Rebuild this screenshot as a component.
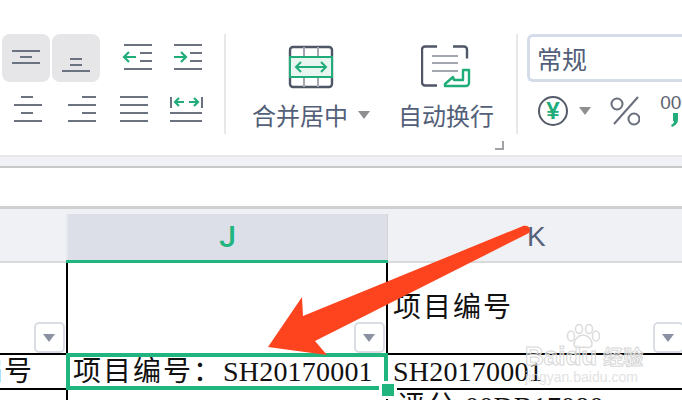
<div class="page">
	<section class="ribbon">
		<div class="align-group">
			<div class="icon-row top">
				<button class="tool">
					<svg width="48" height="48" viewBox="0 0 48 48"><path class="g" d="M10 17h28M18 23h12M10 29h28" /></svg>
				</button>
				<button class="tool">
					<svg width="48" height="48" viewBox="0 0 48 48"><path class="g" d="M18 25h12M18 31h12M10 37h28" /></svg>
				</button>
				<span class="plain first">
					<svg width="40" height="32" viewBox="0 0 40 32"><path class="g" d="M8 4h28M24 12h12M24 20h12M8 28h28" /><path class="gr" d="M20 16H9M13 11l-5 5 5 5" /></svg>
				</span>
				<span class="plain">
					<svg width="40" height="32" viewBox="0 0 40 32"><path class="g" d="M8 4h28M24 12h12M24 20h12M8 28h28" /><path class="gr" d="M8 16h11M15 11l5 5-5 5" /></svg>
				</span>
			</div>
			<div class="icon-row bottom">
				<svg width="34" height="30" viewBox="0 0 34 30"><path class="g" d="M10 3h12M3 11h28M10 19h12M3 27h28" /></svg>
				<svg width="32" height="30" viewBox="0 0 32 30"><path class="g" d="M17 3h14M3 11h28M17 19h14M3 27h28" /></svg>
				<svg width="32" height="30" viewBox="0 0 32 30"><path class="g" d="M3 3h28M3 11h28M3 19h28M3 27h28" /></svg>
				<svg width="36" height="30" viewBox="0 0 36 30"><path class="g" d="M2 3v11M33 3v11M1 19h32M1 27h32" /><path class="gr" d="M6 8h9M10 4L6 8l4 4M29 8h-9M25 4l4 4-4 4" /></svg>
			</div>
		</div>

		<div class="sep"></div>

		<div class="big-btn merge">
			<svg width="48" height="44" viewBox="0 0 48 44">
				<rect x="3" y="2" width="42" height="40" rx="3" class="dark" />
				<path class="thin" d="M17 2v40M31 2v40" />
				<rect x="3" y="12" width="42" height="20" fill="#e8f5f0" stroke="#20ad7a" stroke-width="2" />
				<path class="merge-arrow" d="M9 22h30M14 17l-5 5 5 5M34 17l5 5-5 5" />
			</svg>
			<div class="big-label">合并居中<i class="caret"></i></div>
		</div>
		<div class="big-btn wrap">
			<svg width="50" height="44" viewBox="0 0 50 44">
				<path class="dark" d="M16 1.500H4a3 3 0 0 0-3 3v33a3 3 0 0 0 3 3h12M32 1.500h11a3 3 0 0 1 3 3v9" />
				<path class="thin" d="M11 11h26M11 18h26M11 26h26" />
				<path class="wrap-arrow" d="M42 25h6v13a3 3 0 0 1-3 3H24v-2l8-7 1 3h9z" />
			</svg>
			<div class="big-label">自动换行</div>
		</div>
		<span class="launcher"></span>

		<div class="sep last"></div>

		<div class="number-group">
			<div class="format">常规</div>
			<div class="number-tools">
				<span class="yen">¥</span>
				<i class="caret"></i>
				<svg class="percent" width="30" height="30" viewBox="0 0 30 30"><circle class="g1" cx="7" cy="8" r="5.500" /><circle class="g1" cx="24" cy="23" r="5.500" /><path class="g1" d="M28 1L4 28" /></svg>
				<div class="thousand">
					<span>000</span>
					<svg width="10" height="14" viewBox="0 0 10 14"><path d="M3 0h5v6c0 4-2 6-6 8l-1-2c2-1 3-2 3-4H3z" fill="#20ad7a" /></svg>
				</div>
			</div>
		</div>
	</section>

	<div class="strip"></div>
	<div class="formula-bar"></div>

	<section class="sheet">
		<div class="col-heads">
			<div class="head blank"></div>
			<div class="head active">J</div>
			<div class="head k">K</div>
		</div>

		<div class="row title">
			<div class="cell a"><span class="filter"></span></div>
			<div class="cell j"><span class="filter"></span></div>
			<div class="cell k"><span class="cjk">项目编号</span><span class="filter"></span></div>
		</div>
		<div class="row data">
			<div class="cell a tail"><span class="cjk">编号</span></div>
			<div class="cell j selected"><span class="cjk">项目编号：</span>SH20170001<span class="handle"></span></div>
			<div class="cell k">SH20170001</div>
		</div>
		<div class="row next">
			<div class="cell a"></div>
			<div class="cell j"></div>
			<div class="cell k"><span class="cjk">评分</span>00DB17080</div>
		</div>
	</section>

	<div class="watermark">
		<svg class="paw" width="36" height="26" viewBox="0 0 36 26">
			<ellipse cx="6" cy="12" rx="3.500" ry="5" />
			<ellipse cx="14" cy="5" rx="3.500" ry="4.500" />
			<ellipse cx="24" cy="5" rx="3.500" ry="4.500" />
			<ellipse cx="31" cy="12" rx="3.500" ry="5" />
			<path d="M18 11c-5 0-9 5-9 9 0 4 4 4 9 3 5 1 9 1 9-3 0-4-4-9-9-9z" />
		</svg>
		<div class="wm-main"><span>Baidu</span><span class="wm-cn">经验</span></div>
		<div class="wm-url">jingyan.baidu.com</div>
	</div>

	<svg class="pointer" width="682" height="400" viewBox="0 0 682 400">
		<path d="M268 347L302 297l1 19L523 226c4-1 7 1 7 4 0 2-1 3-3 4L315 341l12 14z" fill="#fe441e" />
	</svg>
</div>

<style>
	:global(body) {
		margin: 0;
		background: #fff;
	}

	.page {
		position: relative;
		width: 682px;
		height: 400px;
		overflow: hidden;
		display: flex;
		flex-direction: column;
		font-family: "Noto Sans CJK SC", "Liberation Sans", sans-serif;
	}

	.ribbon {
		position: relative;
		height: 155px;
		flex: none;
		display: flex;
		align-items: flex-start;
		padding-top: 34px;
		box-sizing: border-box;
	}

	.align-group {
		width: 224px;
		flex: none;
	}

	.icon-row {
		display: flex;
		align-items: center;
	}

	.tool {
		width: 48px;
		height: 48px;
		padding: 0;
		border: 0;
		border-radius: 8px;
		background: #e6e6e8;
		margin-left: 2px;
	}

	.tool svg,
	.plain svg,
	.bottom svg {
		display: block;
	}

	.plain {
		margin-left: 10px;
		margin-top: -2px;
	}

	.plain.first {
		margin-left: 16px;
	}

	.bottom {
		margin-top: 12px;
		padding-left: 11px;
		gap: 20px;
	}

	.g {
		fill: none;
		stroke: #6b7280;
		stroke-width: 2;
	}

	.g1 {
		fill: none;
		stroke: #686e7c;
		stroke-width: 2;
	}

	.gr {
		fill: none;
		stroke: #20ad7a;
		stroke-width: 2.2;
	}

	.sep {
		width: 2px;
		height: 100px;
		background: #e8e8ea;
		flex: none;
	}

	.big-btn {
		display: flex;
		flex-direction: column;
		align-items: center;
		margin-top: 11px;
		flex: none;
	}

	.merge {
		width: 120px;
		margin-left: 25px;
	}

	.wrap {
		width: 100px;
		margin-left: 25px;
	}

	.big-label {
		margin-top: 10px;
		font-size: 24px;
		line-height: 32px;
		color: #535f78;
		white-space: nowrap;
	}

	.dark {
		fill: none;
		stroke: #4f5666;
		stroke-width: 2.4;
	}

	.thin {
		fill: none;
		stroke: #a4a7af;
		stroke-width: 2;
	}

	.merge-arrow {
		fill: none;
		stroke: #20ad7a;
		stroke-width: 2;
	}

	.wrap-arrow {
		fill: #fff;
		stroke: #20ad7a;
		stroke-width: 2.4;
		stroke-linejoin: round;
	}

	.caret {
		display: inline-block;
		width: 0;
		height: 0;
		margin-left: 10px;
		vertical-align: 6px;
		border-left: 6px solid transparent;
		border-right: 6px solid transparent;
		border-top: 8px solid #8f8f92;
	}

	.launcher {
		position: absolute;
		left: 495px;
		top: 141px;
		width: 7px;
		height: 7px;
		border-right: 2px solid #a0a2a8;
		border-bottom: 2px solid #a0a2a8;
	}

	.sep.last {
		margin-left: 20px;
	}

	.number-group {
		margin-left: 9px;
		flex: 1;
		min-width: 0;
	}

	.format {
		height: 48px;
		box-sizing: border-box;
		margin-right: -20px;
		padding-left: 7px;
		border: 3px solid #d4dcea;
		border-right: 0;
		border-radius: 6px 0 0 6px;
		font-size: 25px;
		line-height: 42px;
		color: #535f78;
	}

	.number-tools {
		display: flex;
		align-items: center;
		margin-top: 12px;
		padding-left: 11px;
		white-space: nowrap;
	}

	.yen {
		width: 26px;
		height: 26px;
		flex: none;
		border: 2px solid #535a69;
		border-radius: 50%;
		text-align: center;
		font: 700 24px/26px "Liberation Sans", sans-serif;
		color: #20ad7a;
	}

	.number-tools .caret {
		margin-left: 11px;
		flex: none;
	}

	.percent {
		margin-left: 19px;
		flex: none;
	}

	.thousand {
		margin-left: 21px;
		padding-top: 1px;
		flex: none;
		width: 30px;
		display: flex;
		flex-direction: column;
		align-items: center;
		gap: 2px;
		font: 19px/16px "Liberation Sans", sans-serif;
		color: #5d6473;
	}

	.thousand svg {
		display: block;
		margin-right: 3px;
	}

	.strip {
		height: 11px;
		flex: none;
		box-sizing: border-box;
		background: #f0f1f5;
		border-top: 2px solid #e8e8ea;
	}

	.formula-bar {
		height: 40px;
		flex: none;
		box-sizing: border-box;
		border-top: 2px solid #c8c8c9;
	}

	.sheet {
		flex: 1;
		border-top: 3px solid #d0d0d2;
	}

	.col-heads {
		display: flex;
		height: 54px;
		background: #f0f1f5;
	}

	.head {
		box-sizing: border-box;
		text-align: center;
		font: 28px/50px "Liberation Sans", sans-serif;
		color: #56627a;
		border-bottom: 2px solid #d9dadc;
		padding-top: 3px;
	}

	.head.blank {
		width: 66px;
	}

	.head.active {
		position: relative;
		width: 322px;
		margin-top: 5px;
		padding-top: 0;
		background: #dcdfe7;
		background-clip: padding-box;
		border-left: 2px solid #e8e9ec;
		border-right: 1px solid #d2d3d6;
		border-bottom: 0;
		font: 500 30px/46px Roboto, "Liberation Sans", sans-serif;
		color: #20b57f;
	}

	.head.active::after {
		content: "";
		position: absolute;
		left: -2px;
		right: -1px;
		bottom: 0;
		height: 3px;
		background: #20b57f;
	}

	.head.k {
		flex: 1;
		text-align: left;
		padding-left: 139px;
	}

	.row {
		display: flex;
		font: 28px "Liberation Serif", "Noto Sans CJK SC", serif;
		letter-spacing: 0.2px;
		color: #111;
	}

	.cjk {
		font: 28px/1 "Noto Sans CJK SC", sans-serif;
		letter-spacing: 2px;
	}

	.cell {
		position: relative;
		box-sizing: border-box;
		white-space: nowrap;
	}

	.cell.a {
		width: 68px;
		border-right: 2px solid #000;
	}

	.cell.j {
		width: 320px;
		border-right: 2px solid #000;
	}

	.cell.k {
		flex: 1;
		padding-left: 5px;
	}

	.title {
		height: 92px;
		box-sizing: border-box;
		border-bottom: 2px solid #000;
	}

	.title .cell.k {
		padding-top: 26px;
		line-height: 38px;
	}

	.data {
		height: 35px;
		box-sizing: border-box;
		line-height: 33px;
		border-bottom: 2px solid #000;
	}

	.data .cell,
	.next .cell {
		height: 100%;
	}

	.tail {
		overflow: hidden;
		padding-left: 0;
	}

	.tail .cjk {
		margin-left: -26px;
	}

	.selected {
		padding-left: 5px;
		z-index: 1;
	}

	.selected::before {
		content: "";
		position: absolute;
		left: -2px;
		top: -2px;
		right: -2px;
		bottom: -2px;
		border: 4px solid #20b57f;
	}

	.next {
		height: 29px;
		line-height: 25px;
	}

	.next .cell.k {
		padding-left: 9px;
	}

	.next .cjk {
		margin-right: 8px;
	}

	.filter {
		position: absolute;
		right: 1px;
		bottom: 0;
		width: 31px;
		height: 31px;
		box-sizing: border-box;
		border: 2px solid #dadde5;
		border-radius: 5px;
		background: #fff;
	}

	.filter::after {
		content: "";
		position: absolute;
		left: 7px;
		top: 10px;
		border-left: 6px solid transparent;
		border-right: 6px solid transparent;
		border-top: 8px solid #8b90a3;
	}

	.cell.k .filter {
		right: auto;
		left: 265px;
	}

	.handle {
		position: absolute;
		right: -8px;
		bottom: -8px;
		width: 12px;
		height: 12px;
		background: #20b57f;
		box-shadow: 0 0 0 3px #fff;
	}

	.pointer {
		position: absolute;
		left: 0;
		top: 0;
		z-index: 2;
		pointer-events: none;
	}

	.watermark {
		position: absolute;
		left: 525px;
		top: 324px;
		width: 125px;
		z-index: 3;
		color: rgba(255, 255, 255, 0.55);
		pointer-events: none;
	}

	.paw {
		position: absolute;
		left: 40px;
		top: 0;
		fill: rgba(255, 255, 255, 0.55);
		stroke: #dcdcdc;
		stroke-width: 1.500;
	}

	.wm-main {
		display: flex;
		align-items: flex-end;
		gap: 6px;
		margin-top: 18px;
		height: 28px;
		font: 700 26px/28px "Liberation Sans", sans-serif;
		-webkit-text-stroke: 1px #d8d8d8;
	}

	.wm-cn {
		font: 700 20px/26px "Noto Sans CJK SC", sans-serif;
	}

	.wm-url {
		font: 14px/14px "Liberation Sans", sans-serif;
		color: #dcdcdc;
		opacity: 0.8;
	}
</style>
